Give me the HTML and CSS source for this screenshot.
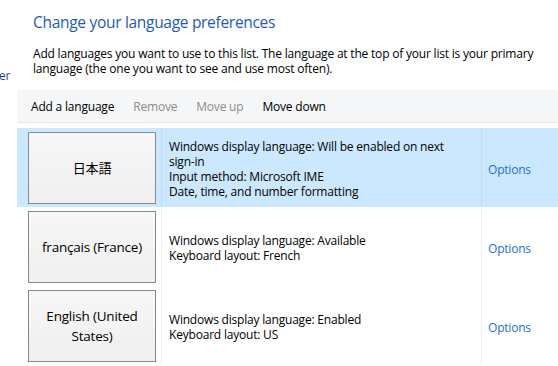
FILE: index.html
```html
<!DOCTYPE html>
<html lang="en">
<head>
    <meta charset="UTF-8">
    <title>Language</title>
    <link rel="stylesheet" href="styles.css">
</head>
<body>
    <div class="page">
        <div class="side">
            <a href="#" class="side-link">er</a>
        </div>

        <div class="main">
            <h1 class="title">Change your language preferences</h1>
            <p class="intro">Add languages you want to use to this list. The language at the top of your list is your primary language (the one you want to see and use most often).</p>

            <div class="toolbar">
                <span class="tool">Add a language</span>
                <span class="tool off">Remove</span>
                <span class="tool off">Move up</span>
                <span class="tool">Move down</span>
            </div>

            <div class="list">
                <div class="row selected">
                    <div class="lang-cell"><div class="lang-btn"><span class="cjk">日本語</span></div></div>
                    <div class="info">
                        Windows display language: Will be enabled on next<br>
                        sign-in<br>
                        Input method: Microsoft IME<br>
                        Date, time, and number formatting
                    </div>
                    <div class="opt"><a href="#">Options</a></div>
                </div>

                <div class="row">
                    <div class="lang-cell"><div class="lang-btn">français (France)</div></div>
                    <div class="info">
                        Windows display language: Available<br>
                        Keyboard layout: French
                    </div>
                    <div class="opt"><a href="#">Options</a></div>
                </div>

                <div class="row">
                    <div class="lang-cell"><div class="lang-btn">English (United<br>States)</div></div>
                    <div class="info">
                        Windows display language: Enabled<br>
                        Keyboard layout: US
                    </div>
                    <div class="opt"><a href="#">Options</a></div>
                </div>
            </div>
        </div>
    </div>
</body>
</html>
```

FILE: styles.css
```css
body {
    margin: 0;
    font-family: "Open Sans", "Noto Sans", sans-serif;
    color: #000000;
    background: #ffffff;
    overflow: hidden;
    letter-spacing: -0.2px;
}

.page {
    display: flex;
    height: 366px;
}

.side {
    width: 17px;
    flex-shrink: 0;
    overflow: hidden;
    padding-top: 67px;
}

.side-link {
    display: block;
    font-size: 12px;
    color: #1c3fa6;
    text-decoration: none;
    margin-left: -1px;
}

.main {
    flex: 1;
    min-width: 0;
}

.title {
    margin: 0;
    padding: 11px 0 0 16px;
    font-size: 15.5px;
    line-height: 22px;
    font-weight: normal;
    letter-spacing: -0.3px;
    color: #1e5ab8;
}

.intro {
    margin: 13px 0 0;
    padding-left: 16px;
    font-size: 12px;
    line-height: 15px;
    width: 505px;
}

.toolbar {
    margin-top: 14px;
    height: 32px;
    background: #f5f6f7;
    border-bottom: 1px solid #e6e8ea;
    display: flex;
    align-items: center;
    gap: 19px;
    padding-left: 14px;
    font-size: 12px;
}

.tool.off {
    color: #8c8c8c;
}

.list {
    margin-top: 5px;
}

.row {
    display: grid;
    grid-template-columns: 145px 320px 1fr;
    height: 79px;
}

.row.selected {
    background: #cce8ff;
}

.lang-cell {
    padding: 4px 0 0 11px;
    border-right: 1px solid #e8eef5;
}

.selected .lang-cell,
.selected .info {
    border-right-color: #bcdcf7;
}

.lang-btn {
    box-sizing: border-box;
    width: 128px;
    height: 72px;
    border: 1px solid #8a8a8a;
    background: linear-gradient(#f7f7f7, #efefef);
    display: flex;
    align-items: center;
    justify-content: center;
    text-align: center;
    font-size: 13.5px;
    line-height: 20px;
}

.cjk {
    font-family: "Noto Sans CJK JP", sans-serif;
    font-size: 13px;
}

.info {
    display: flex;
    flex-direction: column;
    justify-content: center;
    padding: 2px 0 0 7px;
    font-size: 12px;
    line-height: 15px;
    border-right: 1px solid #e8eef5;
}

.opt {
    display: flex;
    align-items: center;
    padding: 3px 0 0 6px;
    font-size: 12px;
}

.opt a {
    color: #1a6fd6;
    text-decoration: none;
}
```
